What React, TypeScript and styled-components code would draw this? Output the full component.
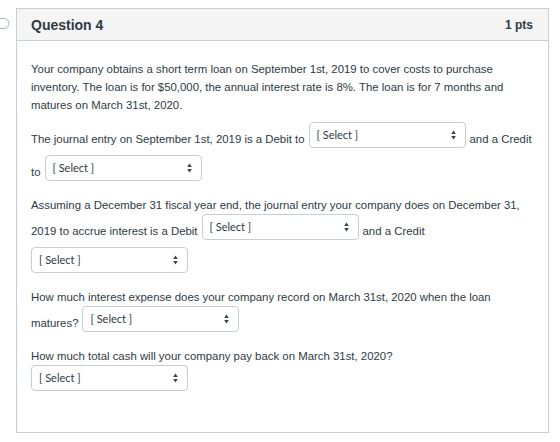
import React from 'react';
import styled, { createGlobalStyle } from 'styled-components';

const GlobalStyle = createGlobalStyle`
  html, body { margin: 0; padding: 0; background: #ffffff; }
  body {
    font-family: "Liberation Sans", Arial, Helvetica, sans-serif;
    color: #2d3b45;
  }
`;

const Page = styled.div`
  display: flex;
  align-items: flex-start;
  padding-top: 8px;
  width: 560px;
`;

const Gutter = styled.div`
  flex: none;
  width: 16px;
  padding-top: 10px;
  display: flex;
`;

const Card = styled.section`
  width: 533px;
  box-sizing: border-box;
  border: 1px solid #c7cdd1;
  background: #ffffff;
`;

const Header = styled.header`
  display: flex;
  justify-content: space-between;
  align-items: center;
  height: 32px;
  box-sizing: border-box;
  padding: 0 15px 0 14px;
  background: #f5f5f5;
  border-bottom: 1px solid #c7cdd1;
`;

const Title = styled.h2`
  margin: 0;
  font-size: 14px;
  font-weight: bold;
  color: #2d3b45;
`;

const Points = styled.div`
  font-size: 12px;
  font-weight: bold;
  color: #2d3b45;
`;

const Body = styled.div`
  padding: 11px 15px 26px 14px;
`;

const Para = styled.div`
  margin: 8px 0;
  font-size: 11.4px;
  line-height: 18px;
`;

const Line = styled.div`
  white-space: nowrap;
`;

const Row = styled.div`
  display: flex;
  align-items: flex-end;
  gap: 4px;
  white-space: nowrap;
`;

const Words = styled.span`
  margin-bottom: 7px;
`;

const SelectBox = styled.div`
  flex: none;
  width: 157px;
  height: 26px;
  box-sizing: border-box;
  margin-bottom: 7px;
  padding: 0 9px 0 7px;
  display: flex;
  align-items: center;
  justify-content: space-between;
  border: 1px solid #c7cdd1;
  border-radius: 4px;
  background: #ffffff;
  font-family: Lato, "Open Sans", sans-serif;
  font-size: 11px;
  color: #2d3b45;
  cursor: pointer;
`;

const Arrows = () => (
  <svg width="5" height="10" viewBox="0 0 5 10" aria-hidden="true">
    <path d="M2.5 0.5 L4.8 4 H0.2 Z" fill="#3b4248" />
    <path d="M2.5 9.5 L4.8 6 H0.2 Z" fill="#3b4248" />
  </svg>
);

const Select: React.FC = () => (
  <SelectBox role="combobox" aria-label="Select">
    <span>[ Select ]</span>
    <Arrows />
  </SelectBox>
);

const FlagIcon = () => (
  <svg width="10" height="12" viewBox="0 0 10 12" aria-hidden="true">
    <path
      d="M0 0.5 H4 A5 5 0 0 1 4 10.5 H0"
      fill="none"
      stroke="#a9b3ba"
      strokeWidth="1"
    />
  </svg>
);

export default function App() {
  return (
    <>
      <GlobalStyle />
      <Page>
        <Gutter>
          <FlagIcon />
        </Gutter>
        <Card>
          <Header>
            <Title>Question 4</Title>
            <Points>1 pts</Points>
          </Header>
          <Body>
            <Para>
              <Line>Your company obtains a short term loan on September 1st, 2019 to cover costs to purchase</Line>
              <Line>inventory. The loan is for $50,000, the annual interest rate is 8%. The loan is for 7 months and</Line>
              <Line>matures on March 31st, 2020.</Line>
            </Para>
            <Para>
              <Row>
                <Words>The journal entry on September 1st, 2019 is a Debit to</Words>
                <Select />
                <Words>and a Credit</Words>
              </Row>
              <Row>
                <Words>to</Words>
                <Select />
              </Row>
            </Para>
            <Para>
              <Line>Assuming a December 31 fiscal year end, the journal entry your company does on December 31,</Line>
              <Row>
                <Words>2019 to accrue interest is a Debit</Words>
                <Select />
                <Words>and a Credit</Words>
              </Row>
              <Row>
                <Select />
              </Row>
            </Para>
            <Para>
              <Line>How much interest expense does your company record on March 31st, 2020 when the loan</Line>
              <Row>
                <Words>matures?</Words>
                <Select />
              </Row>
            </Para>
            <Para>
              <Line>How much total cash will your company pay back on March 31st, 2020?</Line>
              <Row>
                <Select />
              </Row>
            </Para>
          </Body>
        </Card>
      </Page>
    </>
  );
}
